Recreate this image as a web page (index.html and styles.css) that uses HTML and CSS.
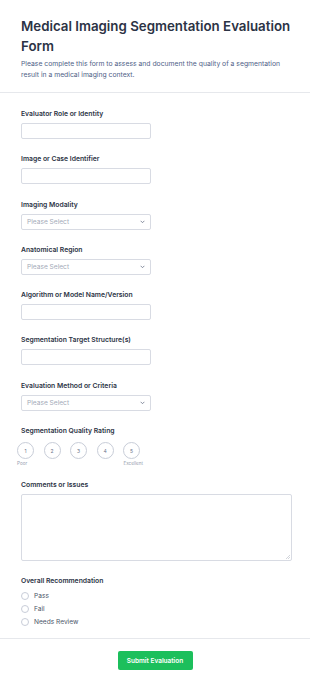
FILE: index.html
```html
<!DOCTYPE html>
<html>
<head>
<meta charset="utf-8">
<link rel="stylesheet" href="styles.css">
</head>
<body>
<div class="page">
  <header class="header">
    <h1 class="title">Medical Imaging Segmentation Evaluation Form</h1>
    <p class="subtitle">Please complete this form to assess and document the quality of a segmentation result in a medical imaging context.</p>
  </header>
  <form class="form">
    <div class="field">
      <label class="label">Evaluator Role or Identity</label>
      <input class="input" type="text">
    </div>
    <div class="field">
      <label class="label">Image or Case Identifier</label>
      <input class="input" type="text">
    </div>
    <div class="field">
      <label class="label">Imaging Modality</label>
      <div class="select"><span>Please Select</span><svg class="chev" viewBox="0 0 8 5" width="5" height="3.5"><path d="M1 1l3 3 3-3" fill="none" stroke="#6b7489" stroke-width="1.3"/></svg></div>
    </div>
    <div class="field">
      <label class="label">Anatomical Region</label>
      <div class="select"><span>Please Select</span><svg class="chev" viewBox="0 0 8 5" width="5" height="3.5"><path d="M1 1l3 3 3-3" fill="none" stroke="#6b7489" stroke-width="1.3"/></svg></div>
    </div>
    <div class="field">
      <label class="label">Algorithm or Model Name/Version</label>
      <input class="input" type="text">
    </div>
    <div class="field">
      <label class="label">Segmentation Target Structure(s)</label>
      <input class="input" type="text">
    </div>
    <div class="field">
      <label class="label">Evaluation Method or Criteria</label>
      <div class="select"><span>Please Select</span><svg class="chev" viewBox="0 0 8 5" width="5" height="3.5"><path d="M1 1l3 3 3-3" fill="none" stroke="#6b7489" stroke-width="1.3"/></svg></div>
    </div>
    <div class="field rating-field">
      <label class="label">Segmentation Quality Rating</label>
      <div class="rating">
        <span class="circle">1</span>
        <span class="circle">2</span>
        <span class="circle">3</span>
        <span class="circle">4</span>
        <span class="circle">5</span>
      </div>
      <div class="rating-ends"><span>Poor</span><span>Excellent</span></div>
    </div>
    <div class="field">
      <label class="label">Comments or Issues</label>
      <div class="textarea"><svg class="grip" viewBox="0 0 4 4" width="4" height="4"><path d="M4 0L0 4M4 2L2 4" stroke="#b5bac5" stroke-width="0.6"/></svg></div>
    </div>
    <div class="field radio-field">
      <label class="label">Overall Recommendation</label>
      <div class="radio"><span class="dot"></span>Pass</div>
      <div class="radio"><span class="dot"></span>Fail</div>
      <div class="radio"><span class="dot"></span>Needs Review</div>
    </div>
  </form>
  <footer class="footer">
    <button class="submit" type="button">Submit Evaluation</button>
  </footer>
</div>
</body>
</html>
```
FILE: styles.css
```css
* { box-sizing: border-box; }
html, body { margin: 0; padding: 0; background: #fff; }
body { font-family: Inter, "Noto Sans", sans-serif; color: #2c3345; }
.page { width: 310px; }
.header { padding: 15.5px 14px 0 21px; border-bottom: 1px solid #e6e8ec; height: 93px; }
.title { margin: 0; font-size: 13.3px; line-height: 20px; font-weight: 600; color: #2c3345; }
.subtitle { margin: 2px 7px 0 0; font-size: 6.8px; line-height: 11.5px; color: #4f6287; }
.form { padding: 16px 21px 0; }
.field { margin-bottom: 15.3px; }
.label { display: block; font-size: 6.8px; line-height: 10px; font-weight: 600; color: #2c3345; margin-bottom: 4px; }
.input { display: block; width: 130px; height: 16px; border: 1px solid #d8dbe3; border-radius: 2px; margin: 0; padding: 0; background: #fff; }
.select { display: flex; align-items: center; justify-content: space-between; width: 130px; height: 16px; border: 1px solid #d8dbe3; border-radius: 2px; padding: 0 5px; font-size: 6.6px; color: #a3aab8; }
.chev { display: block; }
.rating-field .label { margin-bottom: 6px; }
.rating { display: flex; gap: 9.5px; margin-left: -4px; }
.circle { width: 17px; height: 17px; border: 1px solid #c8cdd8; border-radius: 50%; display: flex; align-items: center; justify-content: center; font-size: 5px; color: #6b7489; }
.rating-ends { display: flex; justify-content: space-between; width: 126px; margin-left: -4px; margin-top: 1px; font-size: 4.6px; line-height: 7px; color: #98a0b0; }
.rating-field { margin-bottom: 13px; }
.textarea { position: relative; width: 271px; height: 67px; border: 1px solid #d8dbe3; border-radius: 2px; }
.grip { position: absolute; right: 1px; bottom: 1px; }
.radio-field .label { margin-bottom: 3px; }
.radio { display: flex; align-items: center; gap: 5px; height: 13px; font-size: 6.6px; color: #4a5468; }
.dot { width: 8px; height: 8px; border: 1px solid #c8cdd8; border-radius: 50%; }
.radio-field { margin-bottom: 0; padding-bottom: 10px; }
.footer { border-top: 1px solid #e6e8ec; display: flex; justify-content: center; padding-top: 12px; }
.submit { width: 75px; height: 19px; background: #1cbf5c; border: none; border-radius: 2px; color: #fff; font-family: Inter, sans-serif; font-size: 6.5px; font-weight: 600; padding: 0; }
```
